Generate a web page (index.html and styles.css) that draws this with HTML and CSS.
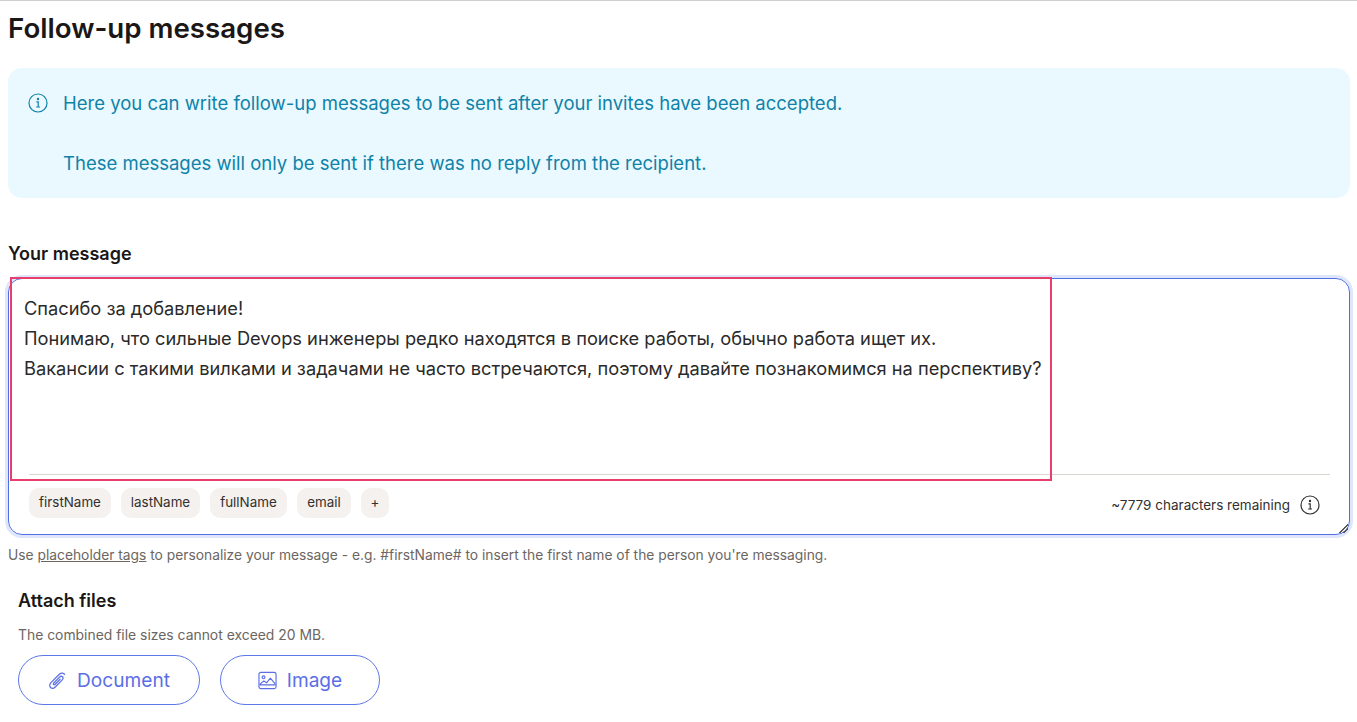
FILE: index.html
```html
<!DOCTYPE html>
<html lang="en">
<head>
<meta charset="utf-8">
<title>Follow-up messages</title>
<link rel="stylesheet" href="styles.css">
</head>
<body>
<main class="page">
  <h1 class="title">Follow-up messages</h1>
  <section class="notice">
    <svg class="notice-icon" viewBox="0 0 20 20" fill="none" stroke="currentColor" stroke-width="1.2"><circle cx="10" cy="10" r="9"/><path d="M8.4 8.9H10.2V14M8.2 14H12"/><circle cx="10" cy="6" r=".6" fill="currentColor"/></svg>
    <div class="notice-text">
      <p>Here you can write follow-up messages to be sent after your invites have been accepted.</p>
      <p>These messages will only be sent if there was no reply from the recipient.</p>
    </div>
  </section>
  <h2 class="label">Your message</h2>
  <div class="editor">
    <div class="editor-text">
      <p>Спасибо за добавление!</p>
      <p>Понимаю, что сильные Devops инженеры редко находятся в поиске работы, обычно работа ищет их.</p>
      <p>Вакансии с такими вилками и задачами не часто встречаются, поэтому давайте познакомимся на перспективу?</p>
    </div>
    <div class="editor-foot">
      <div class="chips">
        <span class="chip chip-first">firstName</span>
        <span class="chip chip-last">lastName</span>
        <span class="chip chip-full">fullName</span>
        <span class="chip chip-email">email</span>
        <span class="chip chip-plus">+</span>
      </div>
      <div class="remaining">
        <span>~7779 characters remaining</span>
        <svg class="remaining-icon" viewBox="0 0 20 20" fill="none" stroke="currentColor" stroke-width="1.2"><circle cx="10" cy="10" r="9"/><path d="M8.4 8.9H10.2V14M8.2 14H12"/><circle cx="10" cy="6" r=".6" fill="currentColor"/></svg>
      </div>
    </div>
    <div class="highlight"></div>
  </div>
  <p class="hint">Use <a href="#">placeholder tags</a> to personalize your message - e.g. #firstName# to insert the first name of the person you're messaging.</p>
  <section class="attach">
    <h3 class="attach-title">Attach files</h3>
    <p class="attach-note">The combined file sizes cannot exceed 20 MB.</p>
    <div class="attach-buttons">
      <button class="btn btn-doc" type="button">
        <svg class="btn-icon" viewBox="0 0 20 20" fill="none" stroke="currentColor" stroke-width="1.3" stroke-linecap="round" stroke-linejoin="round"><path d="M17.4 3.4c-1.6-1.7-3.9-1.6-5.5 0L3.4 12c-2 2.1-2 4.2-.7 5.4 1.4 1.3 3.4 1 5-.6l7.3-7.5c1-1.1 1-2.4.2-3.2-.9-.8-2.1-.7-3.1.3l-6 6.2c-.6.7-.6 1.3-.2 1.7.5.4 1.1.3 1.7-.3l5.1-5.3"/></svg>
        Document
      </button>
      <button class="btn btn-img" type="button">
        <svg class="btn-icon" viewBox="0 0 20 20" fill="none" stroke="currentColor" stroke-width="1.2" stroke-linejoin="round"><rect x="1" y="1.5" width="18" height="17" rx="2"/><circle cx="5.8" cy="6.6" r="1.5"/><path d="M2 14l4.2-3.6 2.8 2L13 7.6l5.5 6.4M1.5 14.6h17"/></svg>
        Image
      </button>
    </div>
  </section>
</main>
</body>
</html>
```
FILE: styles.css
```css
* { box-sizing: border-box; }
html, body { margin: 0; padding: 0; background: #fff; }
body { font-family: Inter, "Noto Sans", sans-serif; color: #1b1b1b; height: 722px; overflow: hidden; }
p, h1, h2, h3 { margin: 0; }
.page { border-top: 1px solid #cfcfcf; padding: 0 7px 0 8px; }
.title { font-size: 27.7px; line-height: 40px; font-weight: 600; margin-top: 7px; color: #1b1717; }
.notice { margin-top: 20px; height: 130px; background: #e9f9ff; border-radius: 14px; padding: 20px 20px 0; display: flex; color: #0f82a8; }
.notice-icon { width: 20px; height: 20px; margin-top: 5px; flex: none; }
.notice-text { margin-left: 15px; font-size: 18.5px; line-height: 30px; }
.notice-text p + p { margin-top: 30px; }
.label { font-size: 18px; line-height: 24px; font-weight: 600; margin-top: 44px; color: #1b1717; }
.editor { position: relative; margin-top: 12px; height: 257px; border: 1px solid #4f6fe3; border-radius: 14px; box-shadow: 0 0 0 3px #dfe6fb; padding: 0 20px; }
.editor::after { content: ""; position: absolute; right: 1px; bottom: 1px; width: 10px; height: 10px; background: linear-gradient(135deg, transparent 52%, #555 52%, #555 60%, transparent 60%, transparent 72%, #555 72%, #555 80%, transparent 80%); }
.editor-text { height: 195px; padding-top: 14px; margin-left: -5px; font-size: 18.25px; line-height: 30px; color: #2a2a2a; }
.editor-foot { border-top: 1px solid #d9d5d0; display: flex; justify-content: space-between; margin-right: -1px; }
.chips { display: flex; gap: 10px; margin-top: 13px; }
.chip { height: 30px; border-radius: 10px; background: #f4f1ee; font-size: 13.4px; line-height: 28px; text-align: center; color: #33302e; }
.chip-first { width: 82px; }
.chip-last { width: 79px; }
.chip-full { width: 77px; }
.chip-email { width: 54px; }
.chip-plus { width: 28px; }
.remaining { display: flex; align-items: center; gap: 10px; margin-top: 20px; height: 20px; font-size: 13.5px; padding-right: 10px; color: #33302e; }
.remaining-icon { width: 20px; height: 20px; }
.highlight { position: absolute; left: 1px; top: -2px; width: 1042px; height: 204px; border: 2px solid #e83e6b; pointer-events: none; }
.hint { margin-top: 10px; font-size: 13.8px; line-height: 20px; color: #6b6662; }
.hint a { color: inherit; }
.attach { padding-left: 10px; }
.attach-title { font-size: 18px; line-height: 24px; font-weight: 600; margin-top: 24px; color: #1b1717; }
.attach-note { font-size: 13.9px; line-height: 20px; margin-top: 12px; color: #6b6662; }
.attach-buttons { display: flex; gap: 20px; margin-top: 10px; }
.btn { height: 50px; border: 1px solid #5b78e6; border-radius: 25px; background: #fff; color: #5a6fe6; font: 400 19.1px Inter, "Noto Sans", sans-serif; display: flex; align-items: center; justify-content: center; gap: 10px; padding: 0; }
.btn-doc { width: 182px; }
.btn-img { width: 160px; }
.btn-icon { width: 19px; height: 19px; flex: none; }
```
